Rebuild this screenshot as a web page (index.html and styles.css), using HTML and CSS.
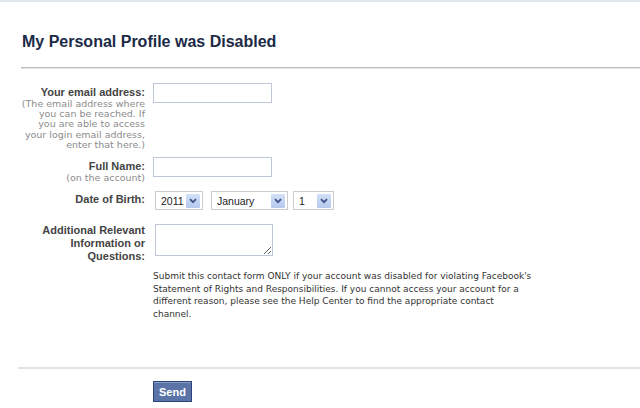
FILE: index.html
```html
<html lang="en">
<head>
    <meta charset="UTF-8">
    <meta name="viewport" content="width=device-width, initial-scale=1.0">
    <title>My Personal Profile was Disabled</title>
    <link rel="stylesheet" href="styles.css">
</head>
<body>
    <div id="page">
        <div class="header">
            <h2>My Personal Profile was Disabled</h2>
        </div>

        <form class="form">
            <div class="row row-email">
                <div class="label">
                    <label for="email">Your email address:</label>
                    <div class="sub">(The email address where<br>you can be reached. If<br>you are able to access<br>your login email address,<br>enter that here.)</div>
                </div>
                <div class="field"><input type="text" id="email" class="text"></div>
            </div>

            <div class="row row-name">
                <div class="label">
                    <label for="name">Full Name:</label>
                    <div class="sub">(on the account)</div>
                </div>
                <div class="field"><input type="text" id="name" class="text"></div>
            </div>

            <div class="row row-dob">
                <div class="label"><label>Date of Birth:</label></div>
                <div class="field selects">
                    <div class="select year"><span>2011</span><span class="arrow"><svg width="8" height="6" viewBox="0 0 8 6"><path d="M1 1.2 L4 4.2 L7 1.2" fill="none" stroke="#3c5487" stroke-width="1.8"/></svg></span></div>
                    <div class="select month"><span>January</span><span class="arrow"><svg width="8" height="6" viewBox="0 0 8 6"><path d="M1 1.2 L4 4.2 L7 1.2" fill="none" stroke="#3c5487" stroke-width="1.8"/></svg></span></div>
                    <div class="select day"><span>1</span><span class="arrow"><svg width="8" height="6" viewBox="0 0 8 6"><path d="M1 1.2 L4 4.2 L7 1.2" fill="none" stroke="#3c5487" stroke-width="1.8"/></svg></span></div>
                </div>
            </div>

            <div class="row row-info">
                <div class="label"><label for="info">Additional Relevant Information or Questions:</label></div>
                <div class="field"><textarea id="info"></textarea></div>
            </div>

            <p class="note">Submit this contact form ONLY if your account was disabled for violating Facebook's Statement of Rights and Responsibilities. If you cannot access your account for a different reason, please see the Help Center to find the appropriate contact channel.</p>

            <div class="footer">
                <button type="button" class="send">Send</button>
            </div>
        </form>
    </div>
</body>
</html>
```

FILE: styles.css
```css
body {
    margin: 0;
    background-color: #fff;
    color: #333;
    font-family: "Liberation Sans", Arial, sans-serif;
    font-size: 10px;
    border-top: 2px solid #e1e5ec;
}

#page {
    padding-left: 18px;
}

.header {
    margin-left: 3px;
    padding-top: 30px;
    padding-bottom: 16px;
    border-bottom: 1px solid #bcbcbc;
    box-shadow: 0 1px 0 #e4e4e4;
}

.header h2 {
    margin: 0 0 0 1px;
    font-size: 16px;
    line-height: 19px;
    color: #1c2a47;
}

.form {
    margin: 0;
    padding-top: 15px;
}

.row {
    display: flex;
}

.label {
    width: 127px;
    margin-right: 8px;
    text-align: right;
}

.label label {
    display: block;
    font-weight: bold;
    font-size: 11px;
    line-height: 13px;
    color: #444;
}

.sub {
    color: #8c8c8c;
    font-family: "DejaVu Sans", sans-serif;
    font-size: 9.5px;
    line-height: 10.2px;
    white-space: nowrap;
}

.row-email .label,
.row-name .label {
    padding-top: 3px;
}

.row-name {
    margin-top: 7px;
}

.row-dob {
    margin-top: 8px;
}

.row-dob .label {
    padding-top: 2px;
}

.row-info {
    margin-top: 14px;
}

.row-info .label {
    padding-left: 18px;
    width: 109px;
}

input.text {
    width: 119px;
    height: 20px;
    box-sizing: border-box;
    border: 1px solid #bdc7d8;
    margin: 0;
    padding: 2px;
}

.selects {
    display: flex;
    padding-left: 2px;
}

.select {
    display: flex;
    align-items: center;
    justify-content: space-between;
    height: 19px;
    box-sizing: border-box;
    border: 1px solid #c9cdd3;
    padding: 0 2px 0 5px;
    font-size: 10.5px;
    color: #222;
    margin-right: 8px;
}

.select.year {
    width: 48px;
}

.select.month {
    width: 77px;
    margin-right: 5px;
}

.select.day {
    width: 41px;
}

.arrow {
    display: flex;
    align-items: center;
    justify-content: center;
    width: 14px;
    height: 14px;
    background: linear-gradient(#d3e0f7, #b5c9ee);
    border-radius: 1px;
}

textarea {
    display: block;
    width: 118px;
    height: 32px;
    box-sizing: border-box;
    margin: 0 0 0 2px;
    border: 1px solid #bdc7d8;
    padding: 2px;
    font-family: inherit;
    font-size: 10px;
}

.note {
    margin: 7px 0 0 135px;
    width: 380px;
    font-family: "DejaVu Sans", sans-serif;
    font-size: 9px;
    line-height: 12.5px;
    color: #333;
}

.footer {
    margin-top: 47px;
    border-top: 2px solid #e4e4e4;
    padding: 12px 0 0 135px;
}

.send {
    display: block;
    height: 21px;
    padding: 0 5px;
    background-color: #5b74a8;
    border: 1px solid #29447e;
    box-shadow: inset 0 1px 0 #8a9cc2;
    color: #fff;
    font-family: "Liberation Sans", Arial, sans-serif;
    font-weight: bold;
    font-size: 11px;
    cursor: pointer;
}
```
